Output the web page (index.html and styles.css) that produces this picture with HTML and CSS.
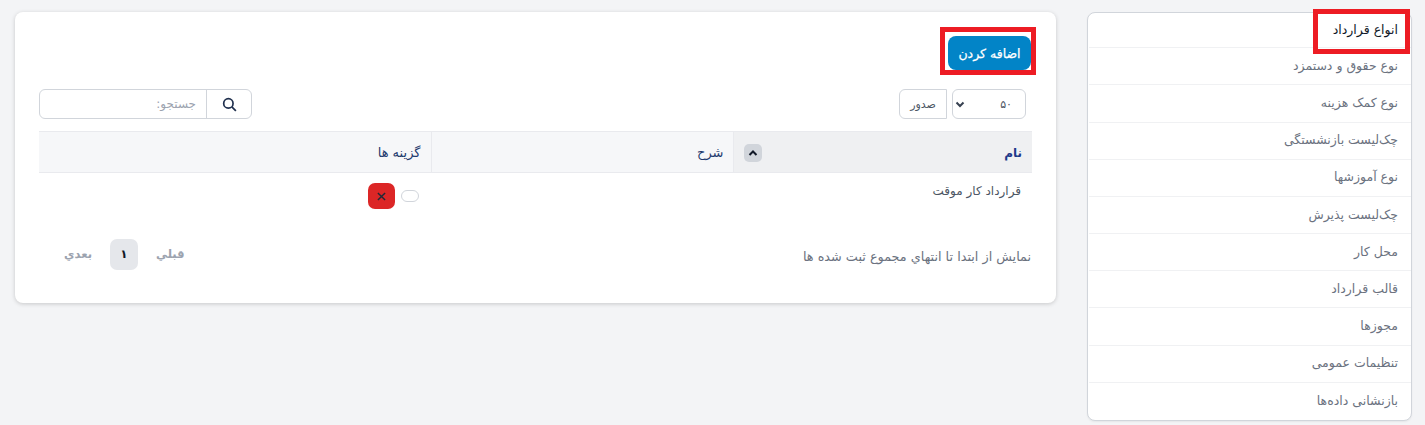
FILE: index.html
```html
<!DOCTYPE html>
<html lang="fa" dir="rtl">
<head>
<meta charset="utf-8">
<title>انواع قرارداد</title>
<link rel="stylesheet" href="styles.css">
</head>
<body>
<div class="page">
  <aside class="side">
    <a class="side-item active"><span>انواع قرارداد</span><i class="mark mark-side"></i></a>
    <a class="side-item">نوع حقوق و دستمزد</a>
    <a class="side-item">نوع کمک هزینه</a>
    <a class="side-item">چک‌لیست بازنشستگی</a>
    <a class="side-item">نوع آموزشها</a>
    <a class="side-item">چک‌لیست پذیرش</a>
    <a class="side-item">محل کار</a>
    <a class="side-item">قالب قرارداد</a>
    <a class="side-item">مجوزها</a>
    <a class="side-item">تنظیمات عمومی</a>
    <a class="side-item">بازنشانی داده‌ها</a>
  </aside>
  <main class="card">
    <div class="top">
      <button class="add">اضافه کردن<i class="mark mark-add"></i></button>
    </div>
    <div class="tools">
      <div class="tools-start">
        <div class="select"><span>۵۰</span>
          <svg class="chev" viewBox="0 0 12 12"><path d="M2.5 4.500 6 8l3.500-3.500" fill="none" stroke="#374151" stroke-width="2"/></svg>
        </div>
        <button class="export">صدور</button>
      </div>
      <div class="search">
        <div class="search-btn">
          <svg viewBox="0 0 16 16" class="glass"><circle cx="6.800" cy="6.800" r="5" fill="none" stroke="#1f2f4d" stroke-width="1.800"/><path d="m10.500 10.500 4.300 4.300" stroke="#1f2f4d" stroke-width="1.800"/></svg>
        </div>
        <input class="search-input" placeholder="جستجو:">
      </div>
    </div>
    <table class="grid">
      <thead>
        <tr>
          <th class="col-name sorted"><div class="th-in"><b>نام</b><span class="sort"><svg viewBox="0 0 10 10"><path d="M1.500 7 5 3.500 8.500 7" fill="none" stroke="#111827" stroke-width="2"/></svg></span></div></th>
          <th class="col-desc">شرح</th>
          <th class="col-opt">گزینه ها</th>
        </tr>
      </thead>
      <tbody>
        <tr>
          <td>قرارداد کار موقت</td>
          <td></td>
          <td>
            <div class="opts">
              <span class="toggle"></span>
              <span class="del"><svg viewBox="0 0 10 10"><path d="m1 1 8 8M9 1 1 9" stroke="#1f2937" stroke-width="1.600"/></svg></span>
            </div>
          </td>
        </tr>
      </tbody>
    </table>
    <div class="foot">
      <div class="info">نمایش از ابتدا تا انتهاي مجموع ثبت شده ها</div>
      <div class="pager">
        <span class="pg">قبلي</span>
        <span class="pg-num">۱</span>
        <span class="pg">بعدي</span>
      </div>
    </div>
  </main>
</div>
</body>
</html>
```
FILE: styles.css
```css
* { box-sizing: border-box; }
html, body { margin: 0; padding: 0; height: 100%; }
body {
  background: #f3f4f6;
  font-family: "DejaVu Sans", "Noto Sans", sans-serif;
  font-size: 13px;
  color: #4b5563;
  overflow: hidden;
}
.page {
  display: flex;
  align-items: flex-start;
  gap: 31px;
  padding: 12px 13px 0 15px;
}
.side {
  width: 325px;
  flex: none;
  background: #fff;
  border: 1px solid #d1d5db;
  border-radius: 8px;
  height: 409px;
  padding: 0 0 0 1px;
  display: flex;
  flex-direction: column;
  box-shadow: 0 1px 2px rgba(0,0,0,.06);
}
.side-item {
  position: relative;
  display: flex;
  align-items: center;
  height: 37.35px;
  padding: 0 13px 2px 0;
  border-bottom: 1px solid #f0f1f3;
  color: #6b7280;
  font-size: 12.5px;
}
.side-item:last-child { border-bottom: 0; }
.side-item.active { color: #111827; height: 35.4px; }
.mark { position: absolute; border: 5px solid #ed1c24; display: block; pointer-events: none; }
.mark-side { right: 1px; top: -4px; width: 97px; height: 45px; }
.mark-add { right: -5px; top: -9px; width: 96px; height: 48px; }
.card {
  flex: 1;
  background: #fff;
  border-radius: 8px;
  height: 291px;
  padding: 24px 24px 0;
  box-shadow: 0 1px 4px rgba(0,0,0,.18);
}
.top { display: flex; height: 34px; padding-right: 1px; }
.add {
  position: relative;
  width: 83px;
  height: 34px;
  background: #0284c7;
  color: #fff;
  border: 0;
  border-radius: 8px;
  font: 400 12.5px "DejaVu Sans", sans-serif;
  -webkit-text-stroke: .25px #fff;
  padding: 0;
}
.tools {
  display: flex;
  justify-content: space-between;
  margin-top: 19px;
  padding-right: 6px;
  height: 30px;
}
.tools-start { display: flex; gap: 5px; }
.select {
  width: 74px;
  height: 30px;
  border: 1px solid #d1d5db;
  border-radius: 6px;
  display: flex;
  align-items: center;
  justify-content: space-between;
  padding: 0 13px 0 1px;
  font-size: 11px;
}
.chev { width: 12px; height: 12px; }
.export {
  width: 48px;
  height: 30px;
  border: 1px solid #d1d5db;
  border-radius: 6px 0 0 6px;
  background: #fff;
  color: #4b5563;
  font: 11px "DejaVu Sans", sans-serif;
  padding: 0;
}
.search {
  width: 213px;
  height: 30px;
  border: 1px solid #d1d5db;
  border-radius: 6px;
  display: flex;
}
.search-input {
  flex: 1;
  min-width: 0;
  border: 0;
  outline: 0;
  background: transparent;
  padding: 0 10px;
  font: 12px "DejaVu Sans", sans-serif;
}
.search-input::placeholder { color: #9ca3af; }
.search-btn {
  width: 45px;
  border-left: 1px solid #d1d5db;
  display: flex;
  align-items: center;
  justify-content: center;
}
.glass { width: 15px; height: 15px; }
.grid {
  width: 993px;
  margin-top: 12px;
  border-collapse: collapse;
  table-layout: fixed;
}
.grid th {
  height: 41px;
  background: #f6f7f9;
  border-top: 1px solid #e9eaee;
  border-bottom: 1px solid #e9eaee;
  text-align: right;
  font-weight: 400;
  color: #1e3a6e;
  font-size: 13px;
  padding: 0 10px;
}
.grid th + th { border-right: 1px solid #e9eaee; }
.grid .sorted { background: #eff0f2; }
.grid .col-desc { padding-right: 9px; }
.col-name { width: 299px; }
.col-desc { width: 302px; }
.th-in { display: flex; justify-content: space-between; align-items: center; padding-top: 1px; }
.th-in b { color: #1e3a8a; font-size: 12px; }
.sort {
  width: 18px;
  height: 18px;
  border-radius: 5px;
  background: #d1d5db;
  display: flex;
  align-items: center;
  justify-content: center;
}
.sort svg { width: 10px; height: 10px; }
.grid td {
  vertical-align: top;
  padding: 11px 11px 0;
  height: 46px;
  color: #4b5563;
  font-size: 12px;
}
.opts { display: flex; align-items: center; gap: 6px; margin-top: -1px; padding-right: 1px; }
.toggle {
  width: 18px;
  height: 12px;
  border: 1px solid #d1d5db;
  border-radius: 6px;
  background: #fff;
}
.del {
  width: 27px;
  height: 26px;
  border-radius: 7px;
  background: #dc2626;
  display: flex;
  align-items: center;
  justify-content: center;
}
.del svg { width: 9px; height: 9px; }
.foot {
  display: flex;
  justify-content: space-between;
  align-items: center;
  margin-top: 20px;
  height: 31px;
}
.info { font-size: 12.8px; color: #6b7280; padding: 5px 1px 0 0; }
.pager { display: flex; align-items: center; gap: 18px; padding-left: 25px; }
.pg { color: #9ca3af; font-weight: 700; font-size: 11.5px; }
.pg-num {
  width: 28px;
  height: 31px;
  border-radius: 7px;
  background: #e5e7eb;
  color: #111827;
  font-weight: 700;
  font-size: 12px;
  display: flex;
  align-items: center;
  justify-content: center;
}
```
